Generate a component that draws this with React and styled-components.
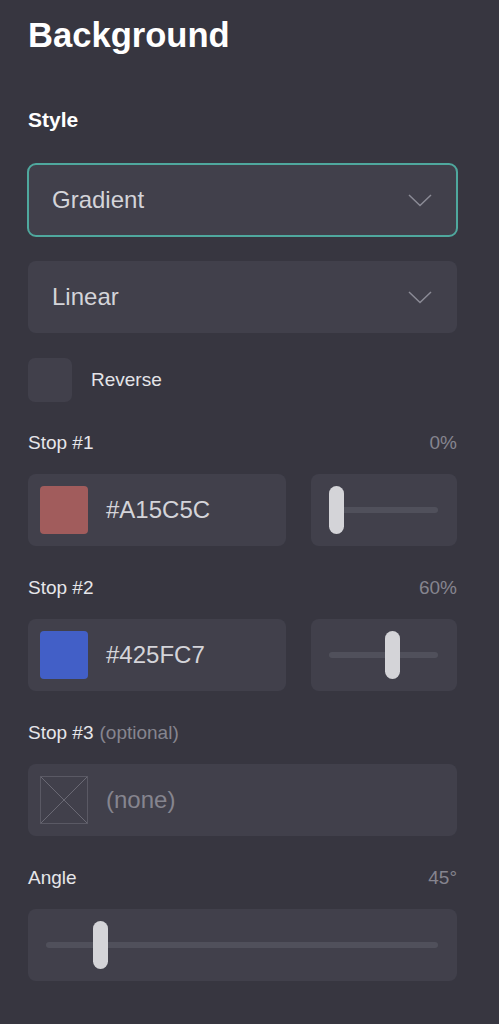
import styled, { createGlobalStyle } from "styled-components";

const GlobalStyle = createGlobalStyle`
    html, body {
        margin: 0;
        padding: 0;
        background: #373640;
        font-family: "Liberation Sans", Arial, Helvetica, sans-serif;
    }
`;

const Panel = styled.div`
    width: 429px;
    padding: 15px 28px 40px;
    display: flex;
    flex-direction: column;
`;

const Title = styled.h1`
    margin: 0;
    font-size: 34.6px;
    line-height: 40px;
    font-weight: 700;
    color: #ffffff;
`;

const SectionTitle = styled.h2`
    margin: 53px 0 0;
    font-size: 21px;
    line-height: 24px;
    font-weight: 700;
    color: #ffffff;
`;

const Select = styled.div`
    margin-top: ${(p) => p.$mt}px;
    height: 72px;
    box-sizing: border-box;
    background: #41404b;
    border-radius: 8px;
    padding: 0 25px 0 24px;
    display: flex;
    align-items: center;
    justify-content: space-between;
    font-size: 24px;
    color: #d4d4d9;
    outline: ${(p) => (p.$focused ? "2px solid #4fa89e" : "none")};
    outline-offset: -1px;
`;

const CheckRow = styled.label`
    margin-top: 25px;
    display: flex;
    align-items: center;
    gap: 19px;
    font-size: 19px;
    color: #e4e4e8;
`;

const CheckBox = styled.span`
    width: 44px;
    height: 44px;
    border-radius: 7px;
    background: #41404b;
`;

const Field = styled.div`
    margin-top: ${(p) => p.$mt}px;
    display: flex;
    flex-direction: column;
    gap: 20px;
`;

const LabelRow = styled.div`
    display: flex;
    justify-content: space-between;
    align-items: baseline;
    font-size: 19px;
    line-height: 22px;
    color: #e6e6ea;
`;

const Muted = styled.span`
    color: #86858f;
    margin-left: ${(p) => (p.$inline ? "6px" : "0")};
`;

const Row = styled.div`
    display: flex;
    gap: 25px;
`;

const Box = styled.div`
    height: 72px;
    box-sizing: border-box;
    background: #41404b;
    border-radius: 8px;
    display: flex;
    align-items: center;
`;

const ColorBox = styled(Box)`
    flex: 1;
    padding: 0 12px;
    gap: 18px;
    font-size: 24px;
    color: ${(p) => (p.$empty ? "#86858f" : "#d4d4d9")};
`;

const Swatch = styled.span`
    width: 48px;
    height: 48px;
    border-radius: 4px;
    background: ${(p) => p.$color};
    flex: none;
`;

const SliderBox = styled(Box)`
    width: ${(p) => (p.$wide ? "100%" : "146px")};
    padding: 0 19px 0 18px;
`;

const Track = styled.div`
    position: relative;
    flex: 1;
    height: 48px;
    &::before {
        content: "";
        position: absolute;
        left: 0;
        right: 0;
        top: 21px;
        height: 6px;
        border-radius: 3px;
        background: #50505b;
    }
`;

const Thumb = styled.span`
    position: absolute;
    top: 0;
    width: 15px;
    height: 48px;
    border-radius: 8px;
    background: #d4d4d8;
`;

const Chevron = () => (
    <svg width="24" height="13" viewBox="0 0 24 13" fill="none">
        <polyline
            points="1,1 12,11.5 23,1"
            stroke="#8b8b96"
            strokeWidth="1.5"
        />
    </svg>
);

const NoneSwatch = () => (
    <svg width="48" height="48" viewBox="0 0 48 48" style={{ flex: "none" }}>
        <rect x="0.5" y="0.5" width="47" height="47" fill="none" stroke="#5a5964" />
        <line x1="1" y1="1" x2="47" y2="47" stroke="#6a6974" />
        <line x1="47" y1="1" x2="1" y2="47" stroke="#6a6974" />
    </svg>
);

const Slider = ({ value, wide }) => (
    <SliderBox $wide={wide}>
        <Track>
            <Thumb style={{ left: `calc(${value} * (100% - 15px))` }} />
        </Track>
    </SliderBox>
);

const stops = [
    { name: "Stop #1", pct: 0, color: "#A15C5C" },
    { name: "Stop #2", pct: 0.6, color: "#425FC7" },
];

const App = () => (
    <>
        <GlobalStyle />
        <Panel>
            <Title>Background</Title>
            <SectionTitle>Style</SectionTitle>
            <Select $mt={32} $focused>
                Gradient
                <Chevron />
            </Select>
            <Select $mt={25}>
                Linear
                <Chevron />
            </Select>
            <CheckRow>
                <CheckBox />
                Reverse
            </CheckRow>
            {stops.map((s, i) => (
                <Field key={s.name} $mt={i === 0 ? 30 : 31}>
                    <LabelRow>
                        {s.name}
                        <Muted>{Math.round(s.pct * 100)}%</Muted>
                    </LabelRow>
                    <Row>
                        <ColorBox>
                            <Swatch $color={s.color} />
                            {s.color}
                        </ColorBox>
                        <Slider value={s.pct} />
                    </Row>
                </Field>
            ))}
            <Field $mt={31}>
                <LabelRow>
                    <span>
                        Stop #3<Muted $inline>(optional)</Muted>
                    </span>
                </LabelRow>
                <Row>
                    <ColorBox $empty>
                        <NoneSwatch />
                        (none)
                    </ColorBox>
                </Row>
            </Field>
            <Field $mt={31}>
                <LabelRow>
                    Angle
                    <Muted>45°</Muted>
                </LabelRow>
                <Slider value={45 / 360} wide />
            </Field>
        </Panel>
    </>
);

export default App;
